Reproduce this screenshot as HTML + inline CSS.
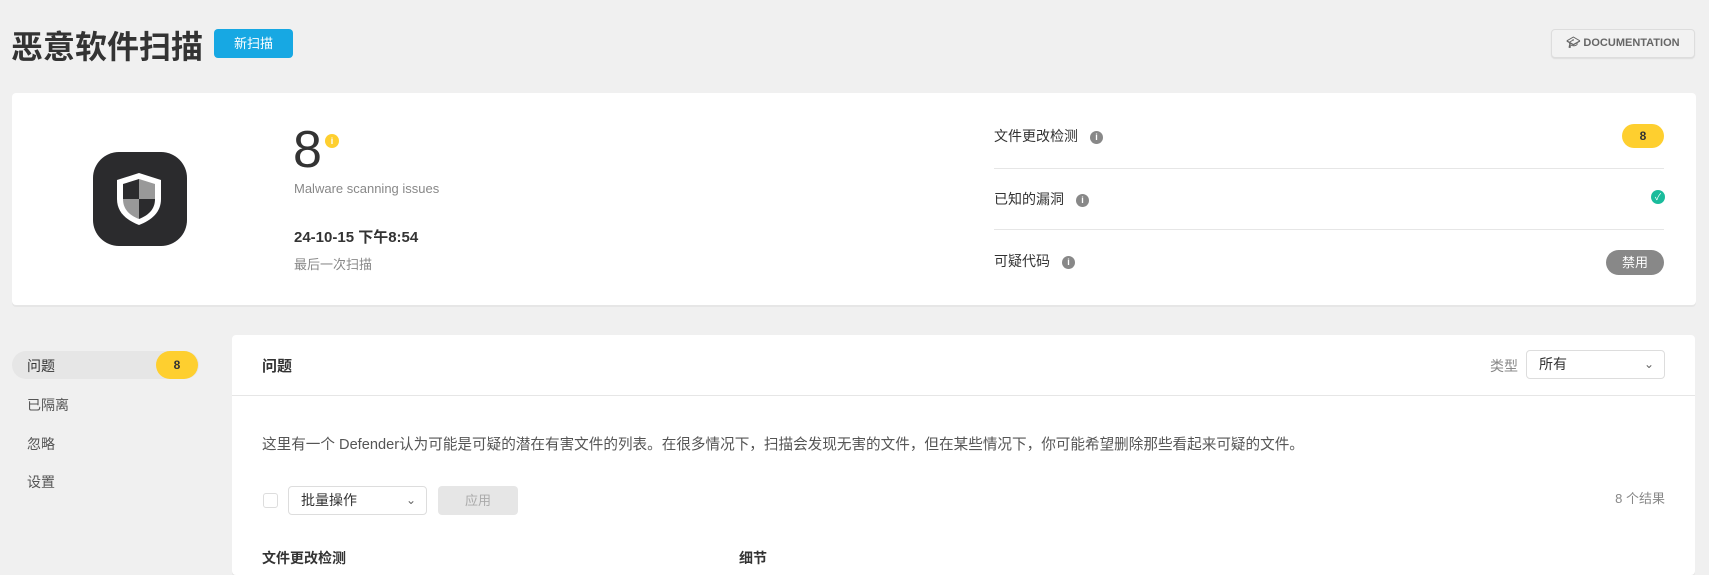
<!DOCTYPE html>
<html><head><meta charset="utf-8"><style>
*{box-sizing:border-box;margin:0;padding:0}
body{width:1709px;height:559px;overflow:hidden;background:#f0f0f0;font-family:"Liberation Sans","Noto Sans CJK SC",sans-serif;color:#333;position:relative}
.a{position:absolute}
.t{font-size:32px;font-weight:bold;color:#333;left:11px;top:22px;letter-spacing:0px}
.btn{background:#17a8e3;color:#fff;font-size:13px;border-radius:4px;text-align:center;line-height:29px}
.card{background:#fff;border-radius:4px;box-shadow:0 2px 0 #e6e6e6}
.lbl{font-size:14px;color:#333}
.ii{width:13px;height:13px;border-radius:50%;background:#888;color:#fff;font-size:9px;font-weight:bold;text-align:center;line-height:13px;display:inline-block;margin-left:12px;vertical-align:1px}
.hr{height:1px;background:#e6e6e6}
.side{font-size:14px;color:#555;left:27px}
</style></head><body>
<div class="a t">恶意软件扫描</div>
<div class="a btn" style="left:214px;top:29px;width:79px;height:29px">新扫描</div>
<div class="a" style="left:1551px;top:29px;width:144px;height:29px;border:1px solid #ddd;border-radius:4px;background:#f2f2f2;font-size:11px;font-weight:bold;color:#666;line-height:27px;text-align:center;box-shadow:0 1px 1px #ddd">🎓︎ DOCUMENTATION</div>

<div class="a card" style="left:12px;top:93px;width:1684px;height:212px"></div>
<div class="a" style="left:93px;top:152px;width:94px;height:94px;border-radius:26px;background:#2b2b2d"></div>
<svg class="a" style="left:115px;top:172px" width="48" height="54" viewBox="0 0 48 54">
<path d="M24 1 L46 8 V27 C46 40 37 48 24 53 C11 48 2 40 2 27 V8 Z" fill="#fff"/>
<path d="M24 7 L40 12 V27 H24 Z" fill="#999"/>
<path d="M24 7 L8 12 V27 H24 Z" fill="#2b2b2d"/>
<path d="M8 27 H24 V47 C14 43 8 37 8 27 Z" fill="#999"/>
<path d="M40 27 H24 V47 C34 43 40 37 40 27 Z" fill="#2b2b2d"/>
</svg>
<div class="a" style="left:293px;top:122px;font-size:52px;color:#333;line-height:56px">8</div>
<div class="a" style="left:325px;top:134px;width:14px;height:14px;border-radius:50%;background:#fecf2f;color:#fff;font-size:9px;font-weight:bold;text-align:center;line-height:14px">i</div>
<div class="a" style="left:294px;top:181px;font-size:13px;color:#888">Malware scanning issues</div>
<div class="a" style="left:294px;top:226px;font-size:15px;font-weight:bold;color:#333">24-10-15 下午8:54</div>
<div class="a" style="left:294px;top:254px;font-size:13px;color:#888">最后一次扫描</div>

<div class="a lbl" style="left:994px;top:126px">文件更改检测<span class="ii">i</span></div>
<div class="a" style="left:1622px;top:124px;width:42px;height:24px;border-radius:12px;background:#fecf2f;font-size:12px;font-weight:bold;text-align:center;line-height:24px;color:#333">8</div>
<div class="a hr" style="left:994px;top:168px;width:670px"></div>
<div class="a lbl" style="left:994px;top:189px">已知的漏洞<span class="ii">i</span></div>
<div class="a" style="left:1651px;top:190px;width:14px;height:14px;border-radius:50%;background:#1abc9c;color:#fff;font-size:9px;text-align:center;line-height:14px">✓</div>
<div class="a hr" style="left:994px;top:229px;width:670px"></div>
<div class="a lbl" style="left:994px;top:251px">可疑代码<span class="ii">i</span></div>
<div class="a" style="left:1606px;top:250px;width:58px;height:25px;border-radius:13px;background:#888;color:#fff;font-size:13px;text-align:center;line-height:25px">禁用</div>

<div class="a" style="left:12px;top:351px;width:187px;height:28px;border-radius:14px;background:#e6e6e6"></div>
<div class="a side" style="top:356px;color:#333">问题</div>
<div class="a" style="left:156px;top:351px;width:42px;height:28px;border-radius:14px;background:#fecf2f;font-size:12px;font-weight:bold;text-align:center;line-height:28px">8</div>
<div class="a side" style="top:395px">已隔离</div>
<div class="a side" style="top:434px">忽略</div>
<div class="a side" style="top:472px">设置</div>

<div class="a card" style="left:232px;top:335px;width:1463px;height:240px"></div>
<div class="a" style="left:262px;top:355px;font-size:15px;font-weight:bold;color:#333">问题</div>
<div class="a" style="left:1490px;top:356px;font-size:14px;color:#888">类型</div>
<div class="a" style="left:1526px;top:350px;width:139px;height:29px;border:1px solid #ddd;border-radius:4px;font-size:14px;line-height:27px;padding-left:12px;color:#333">所有<span style="position:absolute;right:10px;top:0;color:#666;font-size:12px">⌄</span></div>
<div class="a hr" style="left:232px;top:395px;width:1463px"></div>
<div class="a" style="left:262px;top:433px;font-size:14.6px;color:#555;white-space:nowrap">这里有一个 Defender认为可能是可疑的潜在有害文件的列表。在很多情况下，扫描会发现无害的文件，但在某些情况下，你可能希望删除那些看起来可疑的文件。</div>
<div class="a" style="left:263px;top:493px;width:15px;height:15px;border:1px solid #ddd;border-radius:3px"></div>
<div class="a" style="left:288px;top:486px;width:139px;height:29px;border:1px solid #ddd;border-radius:4px;font-size:14px;line-height:27px;padding-left:12px;color:#333">批量操作<span style="position:absolute;right:10px;top:0;color:#666;font-size:12px">⌄</span></div>
<div class="a" style="left:438px;top:486px;width:80px;height:29px;border-radius:4px;background:#e6e6e6;color:#aaa;font-size:13px;text-align:center;line-height:29px">应用</div>
<div class="a" style="left:1600px;top:488px;width:65px;text-align:right;font-size:13px;color:#888">8 个结果</div>
<div class="a" style="left:262px;top:548px;font-size:14px;font-weight:bold">文件更改检测</div>
<div class="a" style="left:739px;top:548px;font-size:14px;font-weight:bold">细节</div>
</body></html>
